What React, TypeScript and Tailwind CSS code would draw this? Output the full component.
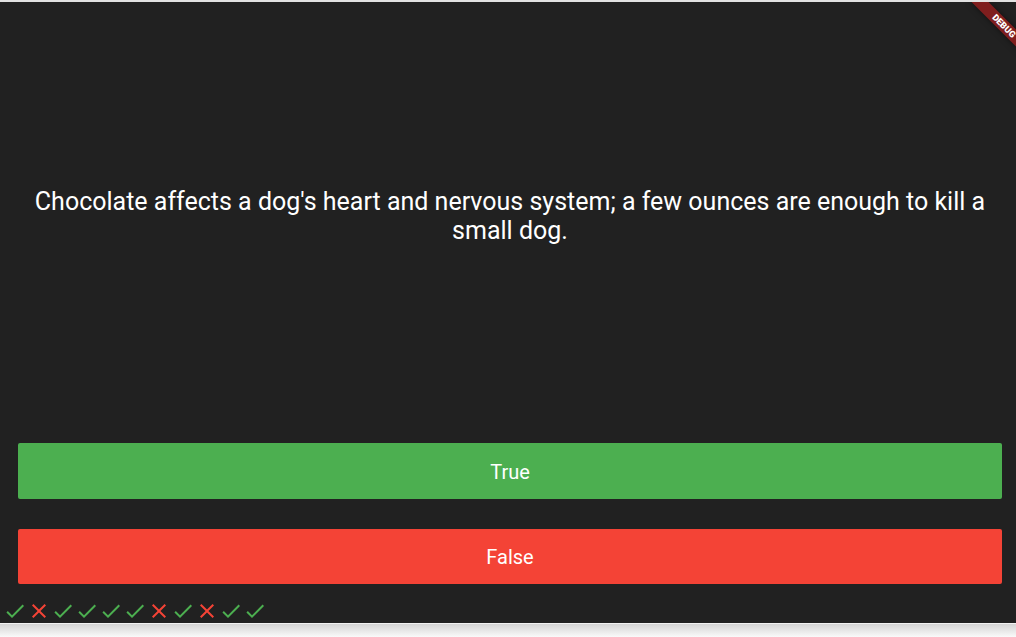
const scores: boolean[] = [true, false, true, true, true, true, false, true, false, true, true];

function CheckIcon() {
  return (
    <svg width="24" height="24" viewBox="0 0 24 24" className="shrink-0">
      <path d="M9 16.17L4.83 12l-1.42 1.41L9 19 21 7l-1.41-1.41z" fill="#4CAF50" />
    </svg>
  );
}

function CloseIcon() {
  return (
    <svg width="24" height="24" viewBox="0 0 24 24" className="shrink-0">
      <path
        d="M19 6.41L17.59 5 12 10.59 6.41 5 5 6.41 10.59 12 5 17.59 6.41 19 12 13.41 17.59 19 19 17.59 13.41 12z"
        fill="#F44336"
      />
    </svg>
  );
}

function DebugBanner() {
  // Flutter's checked-mode banner, anchored at the app's top-right corner
  return (
    <div className="pointer-events-none absolute left-[964px] top-[18px] flex h-[12px] w-[80px] rotate-45 items-center justify-center bg-[#b71c1ca0] shadow-[0_0_6px_rgba(0,0,0,0.5)]">
      <span className="text-[9px] font-black leading-none text-white">DEBUG</span>
    </div>
  );
}

export default function App() {
  return (
    <div className="relative flex h-[637px] w-[1016px] flex-col overflow-hidden bg-white font-['Roboto',sans-serif]">
      {/* window top edge */}
      <div className="h-[2px] shrink-0 bg-[#e2e2e2]" />

      {/* app surface */}
      <div className="relative h-[621px] shrink-0 overflow-hidden bg-[#212121]">
        <div className="-ml-[7px] grid h-full w-[1034px] grid-rows-[5fr_1fr_1fr_24px] px-[10px]">
          <div className="flex items-center justify-center px-[10px] pt-[12px] pb-[10px]">
            <p className="text-center text-[25px] leading-[1.172] text-white">
              Chocolate affects a dog's heart and nervous system; a few ounces are enough to kill a small dog.
            </p>
          </div>
          <div className="flex p-[15px]">
            <button className="flex-1 rounded-[2px] bg-[#4CAF50] pt-[2px] text-[20px] text-white">True</button>
          </div>
          <div className="flex p-[15px]">
            <button className="flex-1 rounded-[2px] bg-[#F44336] pt-[2px] text-[20px] text-white">False</button>
          </div>
          <div className="flex h-[24px]">
            {scores.map((ok, i) => (ok ? <CheckIcon key={i} /> : <CloseIcon key={i} />))}
          </div>
        </div>
        <DebugBanner />
      </div>

      {/* window shadow below */}
      <div className="h-px shrink-0 bg-[#f2f2f2]" />
      <div className="flex-1 bg-gradient-to-b from-[#d4d4d4] to-[#fafafa]" />
    </div>
  );
}
